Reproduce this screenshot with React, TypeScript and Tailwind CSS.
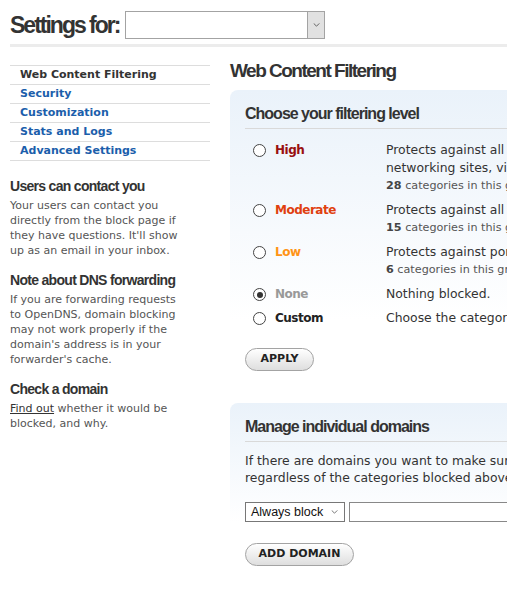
import React from 'react';

const body = "font-['DejaVu_Sans',Verdana,sans-serif]";
const head = "font-['Liberation_Sans',Arial,sans-serif] font-bold text-[#333]";

type Level = {
  name: string;
  color: string;
  desc: string[];
  count?: number;
  checked?: boolean;
};

const levels: Level[] = [
  {
    name: 'High',
    color: 'text-[#990f0f]',
    desc: [
      'Protects against all adult-related sites, illegal activity, social',
      'networking sites, video sharing sites, and general time-wasters.',
    ],
    count: 28,
  },
  {
    name: 'Moderate',
    color: 'text-[#e0400f]',
    desc: ['Protects against all adult-related sites and illegal activity.'],
    count: 15,
  },
  { name: 'Low', color: 'text-[#ff9416]', desc: ['Protects against pornography.'], count: 6 },
  { name: 'None', color: 'text-[#999]', desc: ['Nothing blocked.'], checked: true },
  { name: 'Custom', color: 'text-[#222]', desc: ['Choose the categories you want to block.'] },
];

const nav = ['Web Content Filtering', 'Security', 'Customization', 'Stats and Logs', 'Advanced Settings'];

// sidebar notes, broken where the page breaks them
const notes = [
  {
    title: 'Users can contact you',
    lines: ['Your users can contact you', 'directly from the block page if', "they have questions. It'll show", 'up as an email in your inbox.'],
  },
  {
    title: 'Note about DNS forwarding',
    lines: [
      'If you are forwarding requests',
      'to OpenDNS, domain blocking',
      'may not work properly if the',
      "domain's address is in your",
      "forwarder's cache.",
    ],
  },
];

const Chevron = ({ className }: { className?: string }) => (
  <svg viewBox="0 0 8 5" className={className} fill="none" stroke="currentColor" strokeWidth="1">
    <polyline points="0.5,0.5 4,4 7.5,0.5" />
  </svg>
);

const Radio = ({ checked }: { checked?: boolean }) => (
  <span className="mt-[3px] flex h-[13px] w-[13px] shrink-0 items-center justify-center rounded-full border border-[#444] bg-white">
    {checked && <span className="h-[6px] w-[6px] rounded-full bg-[#333]" />}
  </span>
);

const PillButton = ({ label, width }: { label: string; width: string }) => (
  <button
    className={`flex h-[23px] ${width} items-center justify-center rounded-full border border-[#a3a3a3] bg-[linear-gradient(to_bottom,#ffffff,#dedede)] text-[11px] font-bold text-[#222] ${body}`}
  >
    {label}
  </button>
);

const PanelHeading = ({ children }: { children: React.ReactNode }) => (
  <h3 className={`${head} border-b border-[#d9d9d9] pt-[14px] pb-[4px] text-[16px] leading-[20px] tracking-[-1px]`}>
    {children}
  </h3>
);

const NoteTitle = ({ children }: { children: React.ReactNode }) => (
  <h4 className={`${head} mb-[3px] text-[14px] leading-[17px] tracking-[-0.7px]`}>{children}</h4>
);

export default function App() {
  return (
    <div className="min-h-[597px] w-full overflow-hidden bg-white">
      <div className="w-[980px] pl-[10px]">
        {/* Header */}
        <header className="flex items-center pt-[11px]">
          <h1 className={`${head} text-[23px] leading-[28px] tracking-[-2px]`}>Settings for:</h1>
          <div className="ml-[6px] flex h-[28px] w-[200px] border border-[#a3a3a3] bg-white">
            <div className="flex-1" />
            <div className="flex w-[17px] items-center justify-center border-l border-[#a3a3a3] bg-[#e1e1e1] text-[#444]">
              <Chevron className="h-[4px] w-[7px]" />
            </div>
          </div>
        </header>
        <div className="mt-[5px] h-[3px] bg-[#ececec]" />

        <div className="flex gap-[20px]">
          {/* Sidebar */}
          <aside className={`w-[200px] shrink-0 ${body}`}>
            <ul className="mt-[18px] border-t border-[#ddd]">
              {nav.map((item, i) => (
                <li
                  key={item}
                  className={`border-b border-[#ddd] px-[10px] text-[11px] font-bold leading-[18px] ${
                    i === 0 ? 'text-[#333]' : 'text-[#1b5eab]'
                  }`}
                >
                  {item}
                </li>
              ))}
            </ul>

            {notes.map((n, i) => (
              <section key={n.title} className={i === 0 ? 'mt-[17px]' : 'mt-[14px]'}>
                <NoteTitle>{n.title}</NoteTitle>
                <p className="whitespace-nowrap text-[11px] leading-[15px] text-[#555]">
                  {n.lines.map((l) => (
                    <span key={l} className="block">
                      {l}
                    </span>
                  ))}
                </p>
              </section>
            ))}
            <section className="mt-[14px]">
              <NoteTitle>Check a domain</NoteTitle>
              <p className="whitespace-nowrap text-[11px] leading-[15px] text-[#555]">
                <span className="block">
                  <a className="text-[#333] underline">Find out</a> whether it would be
                </span>
                <span className="block">blocked, and why.</span>
              </p>
            </section>
          </aside>

          {/* Main */}
          <main className="flex-1">
            <h2 className={`${head} mt-[13px] text-[19px] leading-[22px] tracking-[-1.5px]`}>Web Content Filtering</h2>

            <div className="mt-[8px] rounded-tl-[8px] bg-[linear-gradient(to_bottom,#eaf2fa,#ffffff_230px)] px-[15px] pb-[17px]">
              <PanelHeading>Choose your filtering level</PanelHeading>

              <div className={`mt-[12px] flex flex-col gap-[6px] ${body}`}>
                {levels.map((lv) => (
                  <div key={lv.name} className="flex">
                    <div className="ml-[8px] flex w-[133px] shrink-0 gap-[9px]">
                      <Radio checked={lv.checked} />
                      <span className={`text-[12px] font-bold leading-[18px] tracking-[-0.5px] ${lv.color}`}>{lv.name}</span>
                    </div>
                    <div className="whitespace-nowrap text-[12.4px] leading-[18px] text-[#333]">
                      {lv.desc.map((d) => (
                        <div key={d}>{d}</div>
                      ))}
                      {lv.count !== undefined && (
                        <div className="text-[11.2px] text-[#555]">
                          <b className="text-[#444]">{lv.count}</b> categories in this group - View - Customize
                        </div>
                      )}
                    </div>
                  </div>
                ))}
              </div>

              <div className="mt-[21px]">
                <PillButton label="APPLY" width="w-[69px]" />
              </div>
            </div>

            <div className="mt-[15px] rounded-tl-[8px] bg-[linear-gradient(to_bottom,#eaf2fa,#ffffff_120px)] px-[15px] pb-[20px]">
              <PanelHeading>Manage individual domains</PanelHeading>

              <p className={`mt-[10px] whitespace-nowrap text-[12.4px] leading-[17px] text-[#333] ${body}`}>
                If there are domains you want to make sure are always blocked (or always allowed)
                <br />
                regardless of the categories blocked above, you can add them below.
              </p>

              <div className="mt-[16px] flex items-center">
                <div className="flex h-[20px] w-[100px] items-center justify-between border border-[#777] bg-white pl-[5px] pr-[6px] font-['Liberation_Sans',Arial,sans-serif] text-[12.5px] text-[#111]">
                  <span>Always block</span>
                  <Chevron className="h-[4px] w-[7px] text-[#555]" />
                </div>
                <div className="ml-[4px] h-[20px] w-[320px] border border-[#888] bg-white" />
              </div>

              <div className="mt-[21px]">
                <PillButton label="ADD DOMAIN" width="w-[109px]" />
              </div>
            </div>
          </main>
        </div>
      </div>
    </div>
  );
}
